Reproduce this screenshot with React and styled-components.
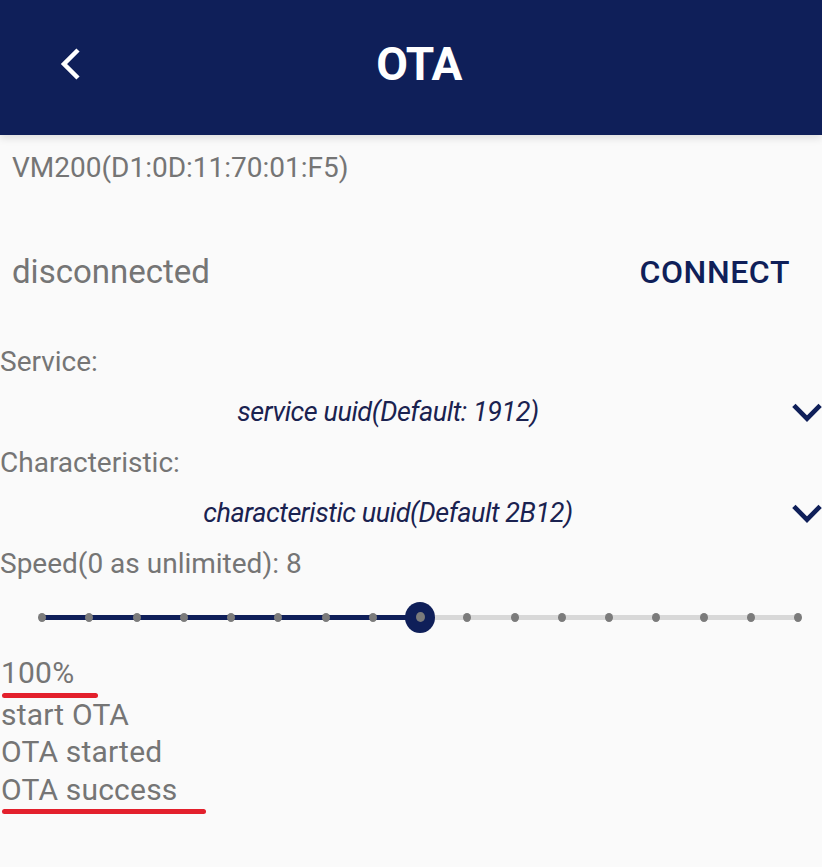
import React from 'react';
import styled, { createGlobalStyle } from 'styled-components';

const GlobalStyle = createGlobalStyle`
  html, body {
    margin: 0;
    padding: 0;
    background: #fafafa;
    font-family: Roboto, "Noto Sans", sans-serif;
  }
`

const NAVY = '#0f1f59';
const GREY = '#757575';

const Page = styled.div`
  width: 822px;
  min-height: 867px;
  background: #fafafa;
  overflow: hidden;
`

const Header = styled.header`
  height: 135px;
  background: ${NAVY};
  display: grid;
  grid-template-columns: 120px 1fr 120px;
  align-items: center;
  padding-bottom: 8px;
  box-sizing: border-box;
  box-shadow: 0 3px 8px rgba(0,0,0,0.12);
  position: relative;
  z-index: 2;
`

const BackButton = styled.button`
  background: none;
  border: none;
  padding: 0 0 0 58px;
  display: flex;
  align-items: center;
  cursor: pointer;
`

const Title = styled.h1`
  margin: 0 0 0 16px;
  text-align: center;
  color: #fff;
  font-size: 46px;
  font-weight: 700;
  letter-spacing: -0.5px;
`

const Content = styled.main`
  display: flex;
  flex-direction: column;
`

const DeviceName = styled.div`
  margin-top: 16px;
  padding-left: 12px;
  font-size: 28px;
  line-height: 33px;
  color: ${GREY};
`

const ConnectRow = styled.div`
  margin-top: 69px;
  height: 36px;
  display: flex;
  justify-content: space-between;
  align-items: baseline;
  padding: 0 32px 0 12px;
`

const Status = styled.span`
  font-size: 33px;
  line-height: 36px;
  color: ${GREY};
`

const ConnectButton = styled.button`
  background: none;
  border: none;
  padding: 0;
  font-family: inherit;
  font-size: 32px;
  font-weight: 500;
  letter-spacing: 0.6px;
  color: ${NAVY};
  cursor: pointer;
`

const Label = styled.div`
  margin-top: ${p => p.$top || 0}px;
  font-size: 28px;
  line-height: 33px;
  color: ${GREY};
`

const Dropdown = styled.div`
  height: 68px;
  display: flex;
  align-items: center;
`

const DropdownText = styled.div`
  flex: 1;
  text-align: center;
  font-size: 27px;
  line-height: 32px;
  font-style: italic;
  letter-spacing: -0.45px;
  color: #1a2250;
`

const DropdownIcon = styled.div`
  width: 46px;
  padding-left: 16px;
  box-sizing: border-box;
  display: flex;
  align-items: center;
  overflow: hidden;
`

const SliderWrap = styled.div`
  height: 74px;
  padding: 0 24px 0 42px;
  display: flex;
  align-items: center;
`

const Track = styled.div`
  flex: 1;
  height: 5px;
  position: relative;
  display: flex;
  justify-content: space-between;
  align-items: center;
  background: linear-gradient(to right, ${NAVY} 0%, ${NAVY} ${p => p.$pct}%, #d8d8d8 ${p => p.$pct}%, #d8d8d8 100%);
`

const Tick = styled.div`
  width: 0;
  height: 0;
  display: flex;
  align-items: center;
  justify-content: center;
`

const Dot = styled.span`
  flex: none;
  width: 8px;
  height: 9px;
  border-radius: 50%;
  background: #7b7b7b;
`

const Thumb = styled.span`
  flex: none;
  width: 30px;
  height: 31px;
  border-radius: 50%;
  background: ${NAVY};
  display: flex;
  align-items: center;
  justify-content: center;
  ${Dot} { width: 9px; height: 10px; }
`

const Log = styled.div`
  display: flex;
  flex-direction: column;
  align-items: flex-start;
`

const LogLine = styled.div`
  position: relative;
  font-size: 30px;
  line-height: 37.5px;
  letter-spacing: 0.2px;
  color: ${GREY};
  padding-left: 1px;
  margin-bottom: ${p => p.$gap || 0}px;

  ${p => p.$mark && `
    &::after {
      content: '';
      position: absolute;
      left: 2px;
      top: calc(100% + 1px);
      width: ${p.$mark}px;
      height: 5px;
      border-radius: 3px;
      background: #e3202c;
    }
  `}
`

const Chevron = () => (
  <svg width="32" height="20" viewBox="0 0 32 20">
    <path d="M2 3 L16 17 L30 3" fill="none" stroke={NAVY} strokeWidth="5" />
  </svg>
);

const speed = 8;
const steps = 16;

export default function App() {
  return (
    <Page>
      <GlobalStyle />
      <Header>
        <BackButton aria-label="back">
          <svg width="26" height="34" viewBox="0 0 26 34">
            <path d="M20 3 L6 17 L20 31" fill="none" stroke="#fff" strokeWidth="4.5" />
          </svg>
        </BackButton>
        <Title>OTA</Title>
        <div />
      </Header>
      <Content>
        <DeviceName>VM200(D1:0D:11:70:01:F5)</DeviceName>
        <ConnectRow>
          <Status>disconnected</Status>
          <ConnectButton>CONNECT</ConnectButton>
        </ConnectRow>

        <Label $top={56}>Service:</Label>
        <Dropdown>
          <DropdownText>service uuid(Default: 1912)</DropdownText>
          <DropdownIcon><Chevron /></DropdownIcon>
        </Dropdown>

        <Label>Characteristic:</Label>
        <Dropdown>
          <DropdownText>characteristic uuid(Default 2B12)</DropdownText>
          <DropdownIcon><Chevron /></DropdownIcon>
        </Dropdown>

        <Label>Speed(0 as unlimited): {speed}</Label>
        <SliderWrap>
          <Track $pct={(speed / steps) * 100}>
            {Array.from({ length: steps + 1 }, (_, i) => (
              <Tick key={i}>
                {i === speed ? <Thumb><Dot /></Thumb> : <Dot />}
              </Tick>
            ))}
          </Track>
        </SliderWrap>

        <Log>
          <LogLine $mark={96} $gap={4}>100%</LogLine>
          <LogLine>start OTA</LogLine>
          <LogLine>OTA started</LogLine>
          <LogLine $mark={204}>OTA success</LogLine>
        </Log>
      </Content>
    </Page>
  );
}
